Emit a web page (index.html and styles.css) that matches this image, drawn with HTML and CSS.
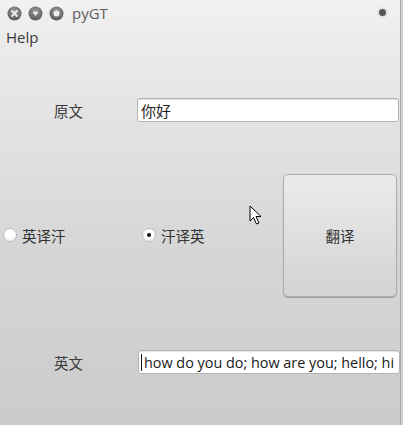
FILE: index.html
```html
<!DOCTYPE html>
<html>
<head>
<meta charset="utf-8">
<link rel="stylesheet" href="styles.css">
</head>
<body>
<div class="window">
  <div class="titlebar">
    <div class="wbtns">
      <svg class="wbtn" width="15" height="15" viewBox="0 0 15 15"><defs><radialGradient id="g1" cx="50%" cy="35%" r="60%"><stop offset="0" stop-color="#a0a0a0"/><stop offset="1" stop-color="#5c5c5c"/></radialGradient></defs><circle cx="7.5" cy="7.5" r="7" fill="url(#g1)"/><path d="M5 5 L10 10 M10 5 L5 10" stroke="#eee" stroke-width="1.8" stroke-linecap="round"/></svg>
      <svg class="wbtn" width="15" height="15" viewBox="0 0 15 15"><circle cx="7.5" cy="7.5" r="7" fill="url(#g1)"/><path d="M4.6 5.8 L10.4 5.8 L7.5 10 Z" fill="#eee"/></svg>
      <svg class="wbtn" width="15" height="15" viewBox="0 0 15 15"><circle cx="7.5" cy="7.5" r="7" fill="url(#g1)"/><circle cx="7.5" cy="7.5" r="3" fill="#eee"/></svg>
    </div>
    <span class="wtitle">pyGT</span>
    <span class="spacer"></span>
    <span class="tdot"></span>
  </div>
  <div class="menubar"><span class="menu">Help</span></div>
  <div class="content">
    <div class="row row-src">
      <span class="label">原文</span>
      <div class="input"><span class="itext">你好</span></div>
    </div>
    <div class="row row-mid">
      <label class="radio r1"><span class="rbox"></span><span class="rlabel">英译汗</span></label>
      <label class="radio r2"><span class="rbox checked"></span><span class="rlabel">汗译英</span></label>
      <div class="btn">翻译</div>
    </div>
    <div class="row row-dst">
      <span class="label">英文</span>
      <div class="input out"><span class="caret"></span><span class="otext">how do you do; how are you; hello; hi</span></div>
    </div>
  </div>
  <svg class="cursor" width="14" height="22" viewBox="0 0 14 22"><path d="M1 1 L1 16 L4.5 12.5 L7.5 19 L10 18 L7 11.5 L12 11.5 Z" fill="#fff" stroke="#000" stroke-width="1" stroke-linejoin="round"/></svg>
</div>
</body>
</html>
```
FILE: styles.css
```css
html, body { margin: 0; padding: 0; }
body { width: 403px; height: 425px; overflow: hidden; background: #cfcfcf; font-family: "Noto Sans CJK SC", "Open Sans", sans-serif; }
.window {
  position: relative;
  width: 400px; height: 425px;
  border-right: 1px solid #a9a9a9;
  background: linear-gradient(#f1f1f1 0px, #e6e6e6 90px, #d6d6d6 250px, #cbcbcb 425px);
}
.titlebar { height: 25px; display: flex; align-items: center; padding-left: 7px; }
.wbtns { display: flex; gap: 6px; margin-top: 1px; }
.wbtn { display: block; }
.wtitle { margin-left: 8px; font-family: "Open Sans", sans-serif; font-size: 15px; color: #5e5e5e; }
.spacer { flex: 1; }
.tdot { width: 7px; height: 7px; border-radius: 50%; background: #555; box-shadow: 0 0 0 2px #e2e2e2; margin-right: 14px; }
.menubar { height: 24px; display: flex; align-items: center; padding-left: 6px; }
.menu { font-family: "Open Sans", sans-serif; font-size: 15px; color: #3a3a3a; }
.content { display: flex; flex-direction: column; padding-top: 49px; }
.row { display: flex; align-items: center; }
.row-src { height: 24px; }
.row-mid { height: 124px; margin-top: 51px; padding-left: 3px; }
.row-dst { height: 24px; margin-top: 53px; }
.label { width: 137px; text-align: center; font-size: 14.5px; color: #3a3a3a; }
.input {
  width: 260px; height: 22px; background: #fff;
  border: 1px solid #b4b4b4; border-radius: 3px;
  box-shadow: inset 0 1px 1px rgba(0,0,0,0.12);
  display: flex; align-items: center;
}
.itext { margin-left: 3px; font-size: 15px; color: #222; }
.out { width: 260px; margin-left: 1px; }
.caret { width: 1px; height: 17px; background: #111; margin-left: 2px; }
.otext { margin-left: 2px; font-family: "Open Sans", sans-serif; font-size: 14.4px; color: #1a1a1a; white-space: nowrap; }
.radio { display: flex; align-items: center; gap: 5px; }
.r1 { width: 139px; }
.r2 { width: 141px; }
.rbox {
  width: 12px; height: 12px; border-radius: 50%;
  border: 1px solid #c0c0c0;
  background: radial-gradient(circle at 50% 40%, #ffffff 40%, #e8e8e8 100%);
  display: flex; align-items: center; justify-content: center;
}
.rbox.checked::after { content: ""; width: 4px; height: 4px; border-radius: 50%; background: #111; }
.rlabel { font-size: 14.5px; color: #333; }
.btn {
  width: 112px; height: 121px;
  border: 1px solid #ababab; border-radius: 5px;
  background: linear-gradient(#ebebeb, #d3d3d3);
  box-shadow: 0 1px 1px rgba(0,0,0,0.25);
  display: flex; align-items: center; justify-content: center;
  font-size: 14.5px; color: #333;
}
.cursor { position: absolute; left: 249px; top: 205px; }
```
